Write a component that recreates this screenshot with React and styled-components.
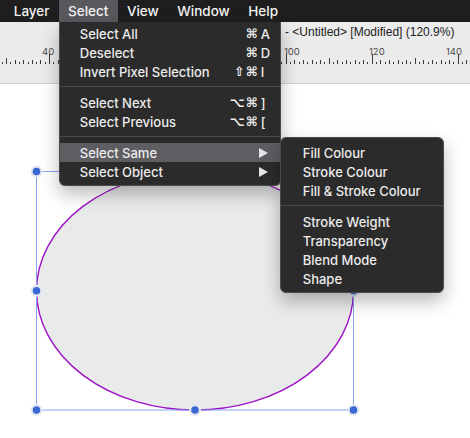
import React from "react";
import styled, { createGlobalStyle } from "styled-components";

const GlobalStyle = createGlobalStyle`
  html, body {
    margin: 0;
    padding: 0;
    background: #ffffff;
    overflow: hidden;
  }
`;

const menuTitles = ["Layer", "Select", "View", "Window", "Help"];

const selectMenu = [
  [
    { label: "Select All", mods: "⌘", key: "A" },
    { label: "Deselect", mods: "⌘", key: "D" },
    { label: "Invert Pixel Selection", mods: "⇧⌘", key: "I" },
  ],
  [
    { label: "Select Next", mods: "⌥⌘", key: "]" },
    { label: "Select Previous", mods: "⌥⌘", key: "[" },
  ],
  [
    { label: "Select Same", sub: true, open: true },
    { label: "Select Object", sub: true },
  ],
];

const sameMenu = [
  ["Fill Colour", "Stroke Colour", "Fill & Stroke Colour"],
  ["Stroke Weight", "Transparency", "Blend Mode", "Shape"],
];

const SubMenu = () => (
  <Submenu>
    {sameMenu.map((group, gi) => (
      <React.Fragment key={gi}>
        {gi > 0 && <Separator />}
        {group.map((label) => (
          <Item key={label} $indent={22}>
            <Label>{label}</Label>
          </Item>
        ))}
      </React.Fragment>
    ))}
  </Submenu>
);

const SelectDropdown = () => (
  <Dropdown>
    {selectMenu.map((group, gi) => (
      <React.Fragment key={gi}>
        {gi > 0 && <Separator />}
        {group.map((item) => (
          <Item key={item.label} $active={item.open}>
            <Label>{item.label}</Label>
            {item.mods && (
              <Shortcut>
                <Mods>{item.mods}</Mods>
                <Key>{item.key}</Key>
              </Shortcut>
            )}
            {item.sub && <Arrow />}
            {item.open && <SubMenu />}
          </Item>
        ))}
      </React.Fragment>
    ))}
  </Dropdown>
);

// ruler ticks: two visible runs, left of the menu and right of it
const tickRun = (originX, originUnit, from, to) => {
  const out = [];
  for (let u = from; u <= to; u++) {
    const x = originX + (u - originUnit) * 4.3;
    let h = 2;
    if (u % 20 === 0) h = 10;
    else if (u % 10 === 0) h = 6;
    else if (u % 2 === 0) h = 4;
    out.push({ x, h, u });
  }
  return out;
};

const Ruler = () => {
  const ticks = [...tickRun(49, 40, 28, 42), ...tickRun(285.7, 100, 99, 145)];
  const labels = [
    { x: 42, t: "40" },
    { x: 284, t: "100" },
    { x: 369, t: "120" },
    { x: 446, t: "140" },
  ];
  return (
    <RulerSvg viewBox="0 42 470 41" width="470" height="41">
      {ticks.map((tk) => (
        <rect key={tk.u} x={Math.round(tk.x)} y={64 - tk.h} width="1" height={tk.h} fill="#3a3a3a" />
      ))}
      {labels.map((l) => (
        <text key={l.t} x={l.x} y="55" fontSize="9.5" fill="#4a4a4a" fontFamily="Inter, 'DejaVu Sans', sans-serif">
          {l.t}
        </text>
      ))}
    </RulerSvg>
  );
};

const Handle = ({ x, y }) => (
  <g>
    <circle cx={x} cy={y} r="6" fill="#e6e8ef" />
    <circle cx={x} cy={y} r="3.8" fill="#3a68d4" />
  </g>
);

const Drawing = () => {
  const x1 = 36.5, x2 = 353.5, y1 = 171.5, y2 = 410;
  const cx = (x1 + x2) / 2, cy = (y1 + y2) / 2;
  return (
    <CanvasSvg viewBox="0 84 470 354" width="470" height="354">
      <ellipse cx={cx} cy={cy} rx={(x2 - x1) / 2} ry={(y2 - y1) / 2} fill="#e9eaea" stroke="#9d12c6" strokeWidth="1.4" />
      <rect x={x1} y={y1} width={x2 - x1} height={y2 - y1} fill="none" stroke="#86a0ee" strokeWidth="1" />
      {[
        [x1, y1], [cx, y1], [x2, y1],
        [x1, cy], [x2, cy],
        [x1, y2], [cx, y2], [x2, y2],
      ].map(([x, y], i) => (
        <Handle key={i} x={x} y={y} />
      ))}
    </CanvasSvg>
  );
};

const App = () => {
  return (
    <Page>
      <GlobalStyle />
      <MenuBar>
        {menuTitles.map((t) => (
          <MenuTitle key={t} $active={t === "Select"}>
            {t}
            {t === "Select" && <SelectDropdown />}
          </MenuTitle>
        ))}
      </MenuBar>
      <Header>
        <TitleRow>- &lt;Untitled&gt; [Modified] (120.9%)</TitleRow>
        <Ruler />
      </Header>
      <Canvas>
        <Drawing />
      </Canvas>
    </Page>
  );
};

const Page = styled.div`
  width: 470px;
  height: 438px;
  position: relative;
  overflow: hidden;
  font-family: Inter, "DejaVu Sans", sans-serif;
`;

const MenuBar = styled.div`
  display: flex;
  height: 22px;
  padding-left: 4.5px;
  background: #1e1e1f;
  position: relative;
  z-index: 10;
`;

const MenuTitle = styled.div`
  position: relative;
  padding: 0 9.25px;
  line-height: 22px;
  font-size: 13.5px;
  font-weight: 500;
  color: #f2f2f2;
  background: ${(p) => (p.$active ? "#59595d" : "transparent")};
`;

const Dropdown = styled.div`
  position: absolute;
  left: 0;
  top: 100%;
  width: 222px;
  box-sizing: border-box;
  padding: 2px 0 4px;
  background: #2b2b2b;
  border: 1px solid #4b4b4b;
  border-top: none;
  border-radius: 0 0 6px 6px;
  box-shadow: 0 8px 18px rgba(0, 0, 0, 0.28);
`;

const Submenu = styled.div`
  position: absolute;
  left: 100%;
  top: -6px;
  width: 164px;
  box-sizing: border-box;
  padding: 5px 0 4px;
  background: #2b2b2b;
  border: 1px solid #4b4b4b;
  border-radius: 6px;
  box-shadow: 0 8px 18px rgba(0, 0, 0, 0.28);
`;

const Item = styled.div`
  position: relative;
  display: flex;
  align-items: center;
  height: 19px;
  padding: 0 9px 0 ${(p) => p.$indent || 20}px;
  font-size: 13px;
  font-weight: 500;
  color: #ececec;
  background: ${(p) => (p.$active ? "#5e5e62" : "transparent")};
`;

const Label = styled.span`
  flex: 1;
  white-space: nowrap;
`;

const Shortcut = styled.span`
  display: flex;
  align-items: center;
`;

const Mods = styled.span`
  font-family: "DejaVu Sans", sans-serif;
  font-size: 13px;
  font-weight: bold;
  letter-spacing: 1px;
`;

const Key = styled.span`
  width: 10px;
  padding-left: 2px;
`;

const Arrow = styled.span`
  width: 0;
  height: 0;
  margin-right: 3px;
  border-top: 5px solid transparent;
  border-bottom: 5px solid transparent;
  border-left: 9px solid #e6e6e6;
`;

const Separator = styled.div`
  height: 1px;
  margin: 5px 0 6px;
  background: #4a4a4a;
`;

const Header = styled.div`
  background: #ebebeb;
  border-bottom: 1px solid #cfcfcf;
`;

const TitleRow = styled.div`
  height: 20px;
  padding-left: 285px;
  line-height: 21px;
  font-family: "Liberation Sans", Arial, sans-serif;
  font-size: 12px;
  color: #222222;
  white-space: nowrap;
`;

const RulerSvg = styled.svg`
  display: block;
`;

const Canvas = styled.div`
  background: #ffffff;
  height: 354px;
`;

const CanvasSvg = styled.svg`
  display: block;
`;

export default App;
